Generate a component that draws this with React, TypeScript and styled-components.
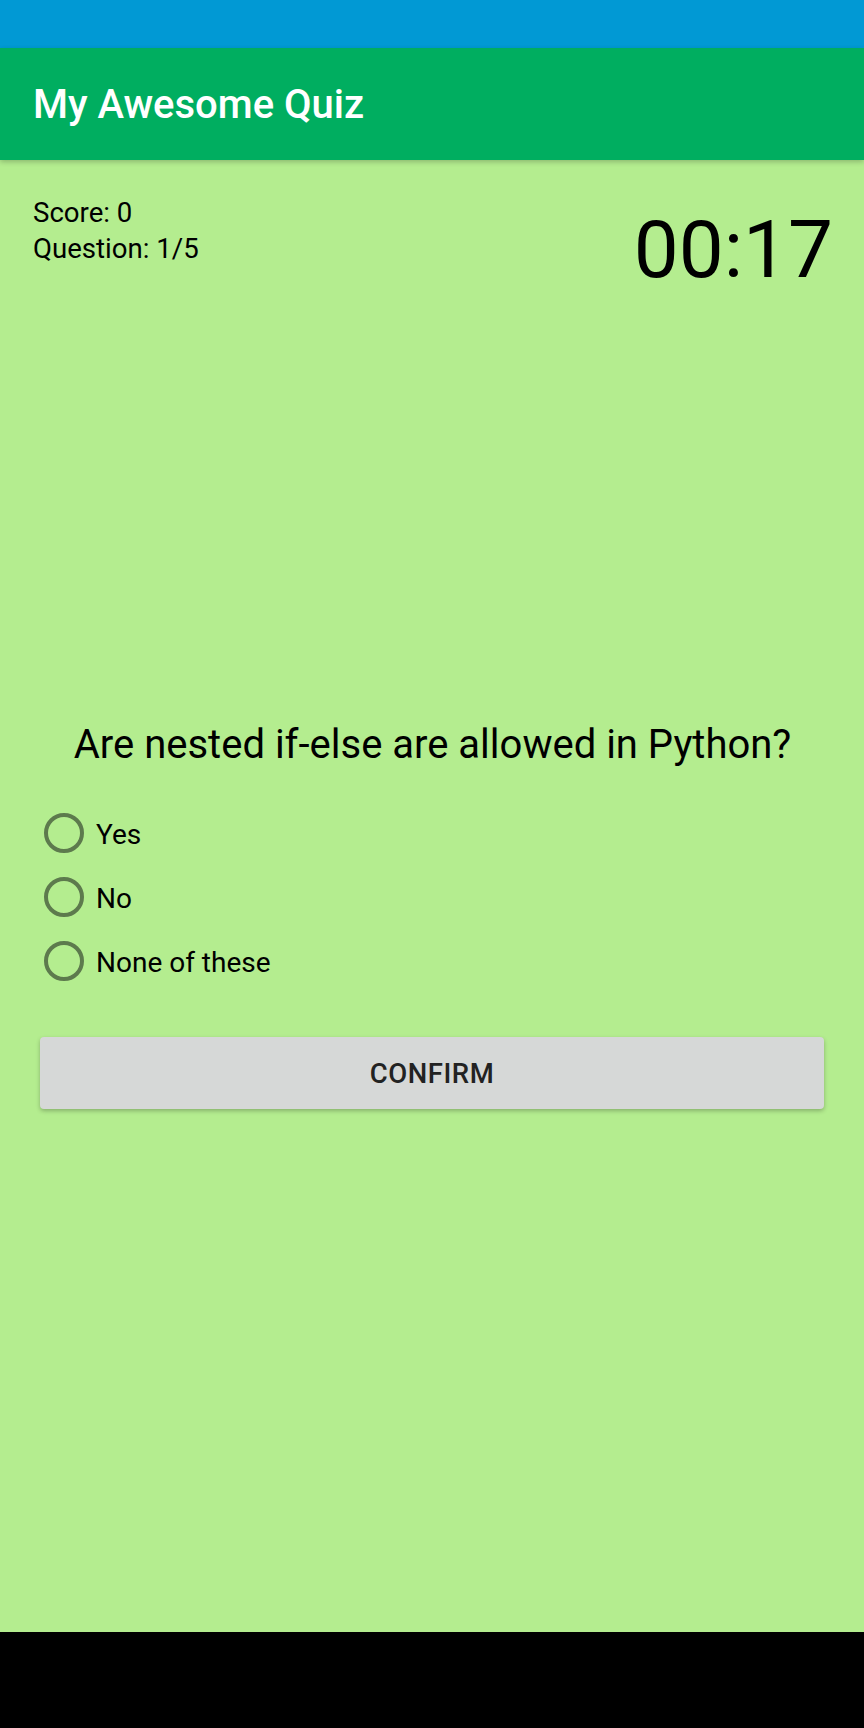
import React from "react";
import styled, { createGlobalStyle } from "styled-components";

const GlobalStyle = createGlobalStyle`
  html, body { margin: 0; padding: 0; }
  body { font-family: Roboto, "Noto Sans", "Liberation Sans", sans-serif; }
  * { box-sizing: border-box; }
`;

const Screen = styled.div`
  width: 864px;
  height: 1728px;
  display: flex;
  flex-direction: column;
  background: #b4ed8f;
  overflow: hidden;
`;

const StatusBar = styled.div`
  height: 48px;
  flex: none;
  background: #0199d4;
`;

const AppBar = styled.header`
  height: 112px;
  flex: none;
  display: flex;
  align-items: center;
  padding: 0 33px;
  background: #00ae60;
  box-shadow: 0 2px 5px rgba(0, 0, 0, 0.22);
  position: relative;
  z-index: 1;
`;

const Title = styled.h1`
  margin: 0;
  padding-top: 2px;
  font-size: 40px;
  font-weight: 500;
  color: #ffffff;
  line-height: 1;
`;

const Body = styled.main`
  flex: 1;
  display: flex;
  flex-direction: column;
  padding: 35px 32px 0 33px;
`;

const InfoRow = styled.div`
  display: flex;
  justify-content: space-between;
  align-items: flex-start;
`;

const Stats = styled.div`
  display: flex;
  flex-direction: column;
`;

const StatLine = styled.span`
  font-size: 27.6px;
  line-height: 36px;
  color: #000000;
`;

const Timer = styled.div`
  font-size: 80px;
  line-height: 96px;
  margin-top: 7px;
  margin-right: -1px;
  color: #000000;
`;

const Question = styled.p`
  margin: 423px 0 0;
  font-size: 40px;
  line-height: 48px;
  text-align: center;
  color: #000000;
`;

const Options = styled.div`
  display: flex;
  flex-direction: column;
  margin-top: 32px;
  padding-left: 11px;
`;

const Option = styled.label`
  height: 64px;
  display: flex;
  align-items: center;
  gap: 12px;
  cursor: pointer;
`;

const RadioCircle = styled.span`
  width: 40px;
  height: 40px;
  flex: none;
  border-radius: 50%;
  border: 4px solid #5d7a4d;
`;

const OptionText = styled.span`
  font-size: 28px;
  color: #000000;
  padding-top: 2px;
`;

const ConfirmButton = styled.button`
  margin: 44px 8px 0 7px;
  height: 72px;
  border: none;
  border-radius: 4px;
  background: #d6d8d7;
  box-shadow: 0 2px 4px rgba(0, 0, 0, 0.25);
  font-family: Roboto, "Noto Sans", sans-serif;
  font-size: 27.5px;
  font-weight: 500;
  letter-spacing: 0.02em;
  color: #222222;
  text-transform: uppercase;
  padding-top: 2px;
`;

const NavBar = styled.div`
  height: 96px;
  flex: none;
  background: #000000;
`;

const options = ["Yes", "No", "None of these"];

export default function App() {
  return (
    <>
      <GlobalStyle />
      <Screen>
        <StatusBar />
        <AppBar>
          <Title>My Awesome Quiz</Title>
        </AppBar>
        <Body>
          <InfoRow>
            <Stats>
              <StatLine>Score: 0</StatLine>
              <StatLine>Question: 1/5</StatLine>
            </Stats>
            <Timer>00:17</Timer>
          </InfoRow>
          <Question>Are nested if-else are allowed in Python?</Question>
          <Options>
            {options.map((o) => (
              <Option key={o}>
                <RadioCircle />
                <OptionText>{o}</OptionText>
              </Option>
            ))}
          </Options>
          <ConfirmButton>Confirm</ConfirmButton>
        </Body>
        <NavBar />
      </Screen>
    </>
  );
}
